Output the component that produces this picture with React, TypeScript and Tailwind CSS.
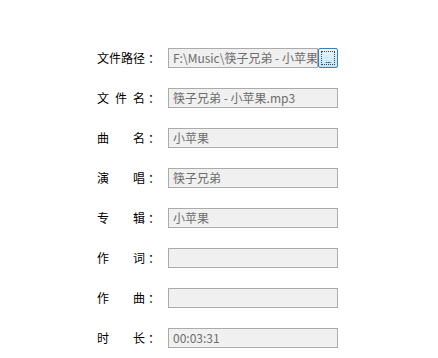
import React from "react";

const font = { fontFamily: '"Noto Sans CJK SC", "Noto Sans", sans-serif' };

function Label({ chars }: { chars: string[] }) {
  return (
    <div className="flex w-[60px] shrink-0 items-center text-[12px] leading-none text-black">
      <div className="flex w-[48px] justify-between">
        {chars.map((c, i) => (
          <span key={i} className="w-[12px] text-center">{c}</span>
        ))}
      </div>
      <span className="w-[12px] pl-[3px]">：</span>
    </div>
  );
}

function Field({ value }: { value: string }) {
  return (
    <div className="flex h-[20px] w-[170px] items-center overflow-hidden whitespace-nowrap border border-[#ababab] bg-[#f0f0f0] pl-[4px] text-[12px] leading-none text-[#6d6d6d]">
      {value}
    </div>
  );
}

const rows: { chars: string[]; value: string }[] = [
  { chars: ["文", "件", "名"], value: "筷子兄弟 - 小苹果.mp3" },
  { chars: ["曲", "名"], value: "小苹果" },
  { chars: ["演", "唱"], value: "筷子兄弟" },
  { chars: ["专", "辑"], value: "小苹果" },
  { chars: ["作", "词"], value: "" },
  { chars: ["作", "曲"], value: "" },
  { chars: ["时", "长"], value: "00:03:31" },
];

export default function App() {
  return (
    <div className="h-[358px] w-[438px] bg-white pl-[97px] pt-[48px]" style={font}>
      <div className="flex flex-col gap-[20px]">
        <div className="flex h-[20px] items-center gap-[11px]">
          <Label chars={["文", "件", "路", "径"]} />
          <div className="flex items-center">
            <div className="h-[20px] w-[150px] overflow-hidden whitespace-nowrap border border-[#ababab] bg-[#f0f0f0] pl-[4px] text-[12px] leading-[18px] text-[#6d6d6d]">
              F:\Music\筷子兄弟 - 小苹果.mp3
            </div>
            <div className="flex h-[20px] w-[20px] shrink-0 items-center justify-center rounded-[2px] border border-[#3c7fb1] bg-gradient-to-b from-[#eaf6fd] to-[#bee6fd] p-[2px]">
              <div className="flex h-full w-full items-end justify-center overflow-hidden border border-dotted border-[#444] pb-[1px] text-[8px] leading-[6px] tracking-[-0.5px] text-black">
                ...
              </div>
            </div>
          </div>
        </div>
        {rows.map((r, i) => (
          <div key={i} className="flex h-[20px] items-center gap-[11px]">
            <Label chars={r.chars} />
            <Field value={r.value} />
          </div>
        ))}
      </div>
    </div>
  );
}
